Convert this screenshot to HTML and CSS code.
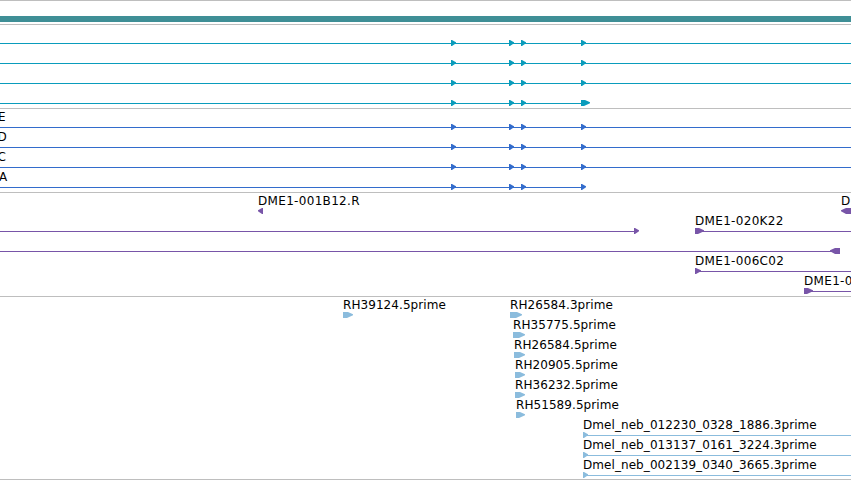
FILE: index.html
```
<!DOCTYPE html>
<html lang="en">
<head>
<meta charset="utf-8">
<title>Genome viewer</title>
<link rel="stylesheet" href="styles.css">
</head>
<body>
<main class="viewer" id="viewer">
<section class="track overview"><div class="sequence"></div></section>
</main>
<script src="tracks.js"></script>
</body>
</html>
```
FILE: styles.css
```
* { box-sizing: border-box; }
body { margin: 0; background: #fff; overflow: hidden; }
.viewer {
  display: flex;
  flex-direction: column;
  width: 851px;
  height: 480px;
  overflow: hidden;
  border-bottom: 1px solid #bebebe;
  font: 12px/16px "DejaVu Sans", sans-serif;
  color: #000;
}
.track { flex: none; border-top: 1px solid #bebebe; padding-top: 3px; }
.overview { height: 24px; padding-top: 15px; }
.sequence { height: 6px; background: #3f8f96; }
.genes { color: #0a9cbc; }
.transcripts { color: #336ccc; }
.clones { color: #7855a8; }
.reads { color: #8bbcdd; }
.row { position: relative; height: 20px; }
.row svg { display: block; }
/* Labels sit at their genomic position on the row. */
.label { position: absolute; top: -3px; margin-left: 1px; white-space: pre; color: #000; letter-spacing: .07px; }
.transcripts .label { margin-left: 0; }
.clones .label { letter-spacing: .32px; }
```
FILE: tracks.js
```
const exons = [[451, 5], [509, 5], [521, 5], [581, 5]];
const tracks = [
  { type: 'genes', rows: [
    { line: [0, 851], right: exons }, { line: [0, 851], right: exons },
    { line: [0, 851], right: exons },
    { line: [0, 586], right: [...exons.slice(0, 3), [581, 9]] }
  ] },
  { type: 'transcripts', rows: [
    { line: [0, 851], right: exons, labels: [[-2, 'E']] },
    { line: [0, 851], right: exons, labels: [[-2.5, 'D']] },
    { line: [0, 851], right: exons, labels: [[-2.5, 'C']] },
    { line: [0, 584], right: exons, labels: [[-1, 'A']] }
  ] },
  { type: 'clones', rows: [
    { left: [[258, 5], [841, 18]], labels: [[257, 'DME1-001B12.R'], [840, 'D']] },
    { line: [0, 638], right: [[634, 5]], more: [700, 851], labels: [[694, 'DME1-020K22']], extra: [[695, 9]] },
    { line: [0, 838], left: [[830, 10]] },
    { line: [698, 851], right: [[695, 6]], labels: [[694, 'DME1-006C02']] },
    { line: [808, 851], right: [[804, 9]], labels: [[803, 'DME1-012A04']] }
  ] },
  { type: 'reads', rows: [
    { right: [[343, 10], [510, 12]], labels: [[342, 'RH39124.5prime'], [509, 'RH26584.3prime']] },
    { right: [[513, 12]], labels: [[512, 'RH35775.5prime']] },
    { right: [[514, 11]], labels: [[513, 'RH26584.5prime']] },
    { right: [[515, 10]], labels: [[514, 'RH20905.5prime']] },
    { right: [[515, 10]], labels: [[514, 'RH36232.5prime']] },
    { right: [[516, 9]], labels: [[515, 'RH51589.5prime']] },
    { line: [583, 851], right: [[583, 5]], labels: [[582, 'Dmel_neb_012230_0328_1886.3prime']] },
    { line: [583, 851], right: [[583, 5]], labels: [[582, 'Dmel_neb_013137_0161_3224.3prime']] },
    { line: [583, 851], right: [[583, 5]], labels: [[582, 'Dmel_neb_002139_0340_3665.3prime']] }
  ] }
];

const line = r => r ? `<rect x="${r[0]}" y="15" width="${r[1] - r[0]}" height="1"/>` : '';
// A feature is a block whose end tapers toward the strand direction.
const right = ([x, w]) => `<path d="M${x} 12H${x + Math.max(1, w - 5)}L${x + w} 14.3V15.3L${x + Math.max(1, w - 6)} 18H${x}Z"/>`;
const left = ([x, w]) => `<path d="M${x + w} 12H${x + Math.min(5, w - 1)}L${x} 14.3V15.3L${x + Math.min(5, w - 1)} 18H${x + w}Z"/>`;

const viewer = document.getElementById('viewer');
for (const track of tracks) {
  const section = document.createElement('section');
  section.className = `track ${track.type}`;
  section.innerHTML = track.rows.map(row => `<div class="row">
    <svg width="851" height="20" fill="currentColor">${line(row.line)}${line(row.more)}${(row.right || []).map(right).join('')}${(row.extra || []).map(right).join('')}${(row.left || []).map(left).join('')}</svg>
    ${(row.labels || []).map(([x, text]) => `<span class="label" style="left:${x}px">${text}</span>`).join('')}
  </div>`).join('');
  viewer.append(section);
}
```
